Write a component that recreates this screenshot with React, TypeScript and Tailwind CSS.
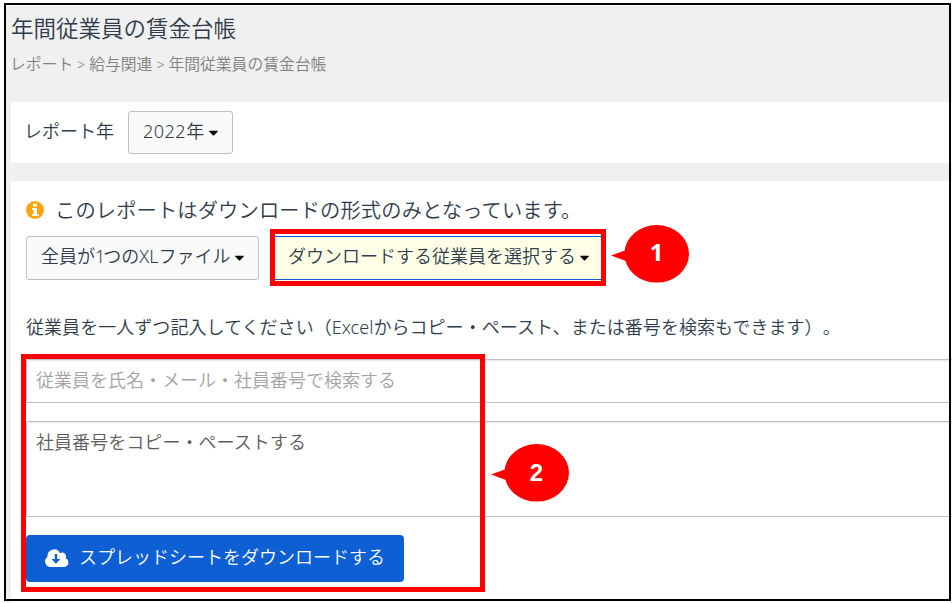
import React from "react";
import { FaCaretDown } from "react-icons/fa";

type DropdownProps = {
  children: React.ReactNode;
  className: string;
};

const Dropdown: React.FC<DropdownProps> = ({ children, className }) => {
  return (
    <button
      type="button"
      className={`flex items-start border pt-[6px] pl-[14px] text-[18px] leading-[26px] whitespace-nowrap ${className}`}
    >
      <span>{children}</span>
      <FaCaretDown className="ml-[2px] mt-[7px] size-[15px] text-black" />
    </button>
  );
};

const InfoIcon: React.FC = () => {
  return (
    <svg viewBox="0 0 18 18" className="size-[18px]">
      <circle cx="9" cy="9" r="9" fill="#ffa50a" />
      <path
        d="M7 2.7h4v2.8H7zM6 7h5v6h1.5v2H6v-2h1.4V9H6z"
        fill="#ffffff"
      />
    </svg>
  );
};

const CloudDownloadIcon: React.FC = () => {
  return (
    <svg viewBox="0 0 24 18" className="mb-[2px] h-[18px] w-[24px]">
      <path
        d="M5.6 18A5.6 5.6 0 0 1 2.5 7.8 6.6 6.6 0 0 1 15 4.2a3.9 3.9 0 0 1 5.6 5A4.6 4.6 0 0 1 19.4 18z"
        fill="#ffffff"
      />
      <path
        d="M9.8 5h2.4v5h3.2L11 14.8 6.6 10h3.2z"
        fill="#0d5fd3"
      />
    </svg>
  );
};

type CalloutProps = {
  label: string;
  className: string;
  labelClassName: string;
};

const Callout: React.FC<CalloutProps> = ({
  label,
  className,
  labelClassName,
}) => {
  return (
    <div className={`absolute h-[58px] w-[78px] ${className}`}>
      <svg viewBox="0 0 78 58" className="block size-full" fill="#ff0000">
        <ellipse cx="45.7" cy="28.8" rx="32.3" ry="28.8" />
        <path d="M0 30.5 15 25v11z" />
      </svg>
      <span
        className={`absolute top-0 right-0 flex w-[65px] items-center justify-center text-[24px] font-bold text-white ${labelClassName}`}
      >
        {label}
      </span>
    </div>
  );
};

const App: React.FC = () => {
  return (
    <div className="relative h-[603px] w-[952px] overflow-hidden bg-white pt-[6px] pl-[4px] font-['Noto_Sans','Noto_Sans_CJK_JP',sans-serif] font-[350] text-[#2f3b4a] [text-spacing-trim:space-all]">
      <div className="h-full bg-[#f0f0f0] pl-[7px]">
        <header className="h-[96px]">
          <h1 className="pt-[7px] text-[22.5px] leading-[32px] whitespace-nowrap">
            年間従業員の賃金台帳
          </h1>
          <p className="-ml-px pt-[7px] text-[15.8px] leading-[24px] whitespace-nowrap text-[#808080]">
            レポート
            <span className="inline-block w-[16px] text-center text-[14px]">&gt;</span>
            給与関連
            <span className="inline-block w-[16px] text-center text-[14px]">&gt;</span>
            年間従業員の賃金台帳
          </p>
        </header>

        <section className="flex h-[61px] bg-white pt-[9px] pl-[13px]">
          <span className="w-[104px] pt-[7px] text-[18px] leading-[26px]">
            レポート年
          </span>
          <Dropdown className="h-[43px] w-[105px] rounded-[3px] border-[#b7c2ca] bg-[#fafafa]">
            <span className="tracking-[0.5px]">2022</span>年
          </Dropdown>
        </section>

        <section className="mt-[18px] h-[440px] bg-white pt-[14px] pl-[15px]">
          <div className="flex h-[30px] items-center">
            <InfoIcon />
            <p className="ml-[11px] text-[20.25px] leading-[30px] tracking-[0.14px] whitespace-nowrap">
              このレポートはダウンロードの形式のみとなっています。
            </p>
          </div>

          <div className="mt-[11px] flex">
            <Dropdown className="h-[44px] w-[233px] rounded-[3px] border-[#b7c2ca] bg-[#fafafa]">
              全員が<span className="tracking-[-2px]">1</span>つのXLファイル
            </Dropdown>
            <Dropdown className="ml-[14px] h-[44px] w-[331px] border-[#0d5fd3] bg-[#ffffe8]">
              <span className="-mr-px">ダウンロードする従業員を選択する</span>
            </Dropdown>
          </div>

          <p className="mt-[34px] text-[18px] leading-[26px] tracking-[0.05px] whitespace-nowrap">
            従業員を一人ずつ記入してください（Excelからコピー・ペースト、または番号を検索もできます）。
          </p>

          <div className="mt-[19px] h-[44px] border-y border-l border-[#b7c2ca] pt-[7px] pl-[9px] text-[18px] leading-[26px] text-[#a3a3a3] shadow-[inset_0_1px_2px_rgba(0,0,0,0.1)]">
            従業員を氏名・メール・社員番号で検索する
          </div>
          <div className="mt-[18px] h-[96px] border-y border-l border-[#b7c2ca] pt-[7px] pl-[9px] text-[18px] leading-[26px] tracking-[0.06px] text-[#5c5c5c] shadow-[inset_0_1px_2px_rgba(0,0,0,0.1)]">
            社員番号をコピー・ペーストする
          </div>

          <button
            type="button"
            className="mt-[18px] flex h-[47px] w-[378px] items-center rounded-[4px] bg-[#0d5fd3] pl-[19px] text-[18px] leading-[26px] whitespace-nowrap text-white"
          >
            <CloudDownloadIcon />
            <span className="mb-[3px] ml-[10px]">スプレッドシートをダウンロードする</span>
          </button>
        </section>
      </div>

      <div className="absolute top-[3px] left-[4px] h-[598px] w-[947px] border-2 border-black" />

      <div className="absolute top-[229px] left-[270px] h-[57px] w-[336px] border-[5px] border-[#ff0000]" />
      <Callout
        label="1"
        className="top-[225px] left-[611px]"
        labelClassName="h-[54px] font-['Noto_Sans',sans-serif]"
      />

      <div className="absolute top-[354px] left-[21px] h-[238px] w-[464px] border-[5px] border-[#ff0000]" />
      <Callout
        label="2"
        className="top-[444px] left-[491px]"
        labelClassName="h-[58px] font-['Liberation_Sans',sans-serif]"
      />
    </div>
  );
};

export default App;
